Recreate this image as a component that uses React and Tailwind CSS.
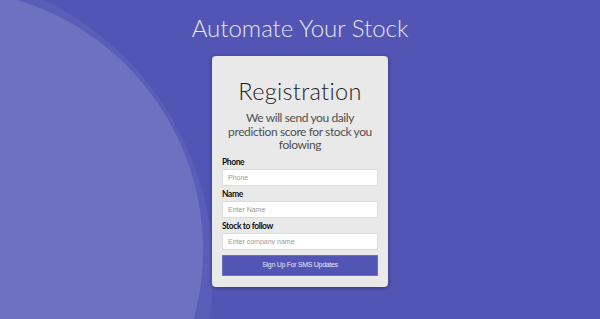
import React from "react";

const App = () => {
  return (
    <div
      className="relative w-full h-[319px] overflow-hidden bg-[#5255b4]"
      style={{ fontFamily: "Lato, 'Noto Sans', sans-serif" }}
    >
      {/* background circles */}
      <div className="absolute left-[-387px] top-[-30px] w-[600px] h-[600px] rounded-full bg-white/[0.05]" />
      <div className="absolute left-[-319px] top-[-11px] w-[522px] h-[522px] rounded-full bg-white/[0.12]" />

      <div className="relative flex flex-col items-center">
        <h1 className="mt-[10px] text-[24px] font-light leading-[36px] text-[#e6e6f5]">
          Automate Your Stock
        </h1>

        <div className="mt-[10px] w-[176px] rounded-[4px] bg-[#e9e9e9] px-[10px] pb-[11px] pt-[21px] shadow-[0_1px_4px_rgba(0,0,0,0.35)]">
          <h2 className="text-center text-[23.5px] font-light leading-[29px] tracking-[0.3px] text-[#1e1e1e]">
            Registration
          </h2>
          <p className="mx-auto mt-[5px] max-w-[146px] text-center text-[12px] leading-[13.5px] tracking-[-0.4px] text-[#505050]">
            We will send you daily prediction score for stock you folowing
          </p>

          <form className="mt-[4.5px] flex flex-col" onSubmit={(e) => e.preventDefault()}>
            <label className="text-[8.5px] font-bold leading-[13px] tracking-[-0.4px] text-[#111]">Phone</label>
            <input
              placeholder="Phone"
              className="h-[17px] w-full border border-[#dcdcdc] bg-white px-[5px] text-[7px] text-[#333] placeholder:text-[#9a9a9a] outline-none"
              style={{ fontFamily: "'Liberation Sans', Arial, sans-serif" }}
            />
            <label className="mt-[2px] text-[8.5px] font-bold leading-[13px] tracking-[-0.4px] text-[#111]">Name</label>
            <input
              placeholder="Enter Name"
              className="h-[17px] w-full border border-[#dcdcdc] bg-white px-[5px] text-[7px] text-[#333] placeholder:text-[#9a9a9a] outline-none"
              style={{ fontFamily: "'Liberation Sans', Arial, sans-serif" }}
            />
            <label className="mt-[2px] text-[8.5px] font-bold leading-[13px] tracking-[-0.4px] text-[#111]">Stock to follow</label>
            <input
              placeholder="Enter company name"
              className="h-[17px] w-full border border-[#dcdcdc] bg-white px-[5px] text-[7px] text-[#333] placeholder:text-[#9a9a9a] outline-none"
              style={{ fontFamily: "'Liberation Sans', Arial, sans-serif" }}
            />
            <button
              type="submit"
              className="mt-[5px] h-[21px] w-full border border-[#6e70c4] bg-[#5355b5] text-[7px] tracking-[-0.3px] text-[#e6e6f6]"
              style={{ fontFamily: "'Liberation Sans', Arial, sans-serif" }}
            >
              Sign Up For SMS Updates
            </button>
          </form>
        </div>
      </div>
    </div>
  );
};

export default App;
